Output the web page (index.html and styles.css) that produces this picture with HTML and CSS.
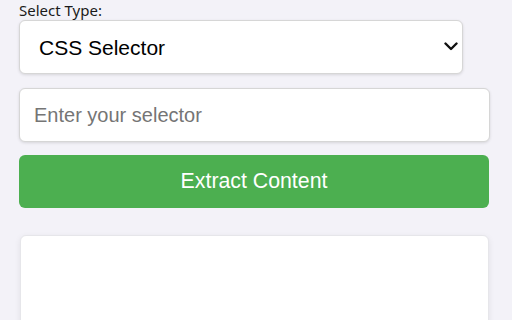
FILE: index.html
```html
<!DOCTYPE html>
<html>
<head>
<meta charset="utf-8">
<link rel="stylesheet" href="styles.css">
</head>
<body>
<main class="panel">
  <label class="label" for="type">Select Type:</label>
  <div class="select-wrap">
    <select id="type" class="select">
      <option>CSS Selector</option>
      <option>XPath</option>
    </select>
    <svg class="chevron" width="14" height="9" viewBox="0 0 14 9"><path d="M1.5 1.5 L7 7 L12.5 1.5" fill="none" stroke="#111" stroke-width="2.4" stroke-linecap="round" stroke-linejoin="round"/></svg>
  </div>
  <input class="input" type="text" placeholder="Enter your selector">
  <button class="button">Extract Content</button>
  <div class="result"></div>
</main>
</body>
</html>
```
FILE: styles.css
```css
html, body {
  margin: 0;
  padding: 0;
  background: #f3f2f8;
  height: 100%;
  overflow: hidden;
}
.panel {
  display: flex;
  flex-direction: column;
  padding: 0 22px 0 19px;
  width: 471px;
}
.label {
  font-family: "Noto Sans", "Open Sans", sans-serif;
  font-size: 15px;
  line-height: 20px;
  height: 20px;
  color: #1a1a1a;
}
.select-wrap {
  position: relative;
  width: 444px;
}
.select {
  appearance: none;
  -webkit-appearance: none;
  width: 444px;
  height: 54px;
  box-sizing: border-box;
  border: 1px solid #d6d6d6;
  border-radius: 6px;
  background: #fff;
  box-shadow: 0 1px 3px rgba(0,0,0,0.12);
  font-family: "Liberation Sans", Arial, sans-serif;
  font-size: 21px;
  color: #000;
  padding: 0 0 0 19px;
  margin: 0;
}
.chevron {
  position: absolute;
  right: 5px;
  top: 22px;
  pointer-events: none;
}
.input {
  margin-top: 14px;
  width: 471px;
  height: 54px;
  box-sizing: border-box;
  border: 1px solid #d6d6d6;
  border-radius: 6px;
  background: #fff;
  box-shadow: 0 1px 3px rgba(0,0,0,0.12);
  font-family: "Liberation Sans", Arial, sans-serif;
  font-size: 20px;
  padding: 0 0 0 14px;
  outline: none;
}
.input::placeholder {
  color: #757575;
}
.button {
  margin-top: 13px;
  width: 470px;
  height: 53px;
  border: none;
  border-radius: 6px;
  background: #4caf50;
  color: #fff;
  font-family: "Liberation Sans", Arial, sans-serif;
  font-size: 21.3px;
  padding: 0;
}
.result {
  margin-top: 27px;
  margin-left: 1px;
  width: 469px;
  height: 120px;
  box-sizing: border-box;
  background: #fff;
  border: 1px solid #e6e6ea;
  border-radius: 6px;
  box-shadow: 0 2px 6px rgba(0,0,0,0.08);
}
```
